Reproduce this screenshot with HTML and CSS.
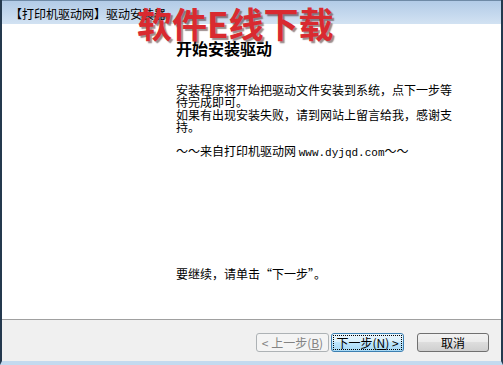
FILE: index.html
```html
<!DOCTYPE html>
<html lang="zh-CN">
<head>
    <meta charset="UTF-8">
    <title>【打印机驱动网】驱动安装器</title>
    <link rel="stylesheet" href="styles.css">
</head>
<body>
    <div class="window">
        <div class="titlebar">【打印机驱动网】驱动安装器</div>
        <div class="watermark">软件E线下载</div>

        <div class="content">
            <h1>开始安装驱动</h1>
            <p class="info">安装程序将开始把驱动文件安装到系统，点下一步等待完成即可。</p>
            <p class="info">如果有出现安装失败，请到网站上留言给我，感谢支持。</p>
            <p class="info from">～～来自打印机驱动网 <span class="url">www.dyjqd.com</span>～～</p>
            <p class="info next-hint">要继续，请单击“下一步”。</p>
        </div>

        <div class="footer">
            <button class="btn btn-back" disabled>&lt; 上一步(<u>B</u>)</button>
            <button class="btn btn-next"><span class="focus">下一步(<u>N</u>) &gt;</span></button>
            <button class="btn btn-cancel">取消</button>
        </div>
    </div>
</body>
</html>
```

FILE: styles.css
```css
* { margin: 0; padding: 0; box-sizing: border-box; }
body {
    font-family: 'Noto Sans CJK SC', 'DejaVu Sans', sans-serif;
    font-size: 12px;
    color: #000;
    background: #fff;
    width: 503px;
    height: 365px;
    overflow: hidden;
}
.window {
    position: relative;
    width: 503px;
    height: 365px;
    display: flex;
    flex-direction: column;
    border-left: 2px solid #24394e;
    border-right: 2px solid #24394e;
    border-bottom: 4px solid #c3daef;
    background: #fff;
}
.titlebar {
    height: 24px;
    line-height: 25px;
    padding-left: 8px;
    background: linear-gradient(#b2cbe7, #d2e2f2);
    border-top: 1px solid #6f8aa6;
    white-space: nowrap;
}
.watermark {
    position: absolute;
    left: 135px;
    top: 4px;
    font-size: 35px;
    line-height: 38px;
    font-weight: 700;
    color: #d92a30;
    text-shadow: 2px 2px 1px rgba(60, 30, 30, 0.5);
    white-space: nowrap;
}
.content {
    flex: 1;
    padding: 15px 0 0 174px;
    background: #fff;
}
h1 {
    font-size: 16px;
    font-weight: 700;
    line-height: 18px;
    margin-bottom: 27px;
}
.info {
    width: 282px;
    line-height: 12.3px;
}
.from {
    margin-top: 12px;
}
.url {
    font-family: 'Liberation Mono', monospace;
    font-size: 11px;
}
.next-hint {
    margin-top: 109px;
}
.footer {
    height: 42px;
    border-top: 1px solid #a0a0a0;
    background: #f0f0f0;
    display: flex;
    align-items: flex-start;
    padding: 13px 0 0 254px;
}
.btn {
    font-family: inherit;
    font-size: 12px;
    width: 73px;
    height: 19px;
    line-height: 15px;
    border-radius: 3px;
    border: 1px solid #707070;
    background: linear-gradient(#f2f2f2 0%, #ebebeb 45%, #dddddd 50%, #cfcfcf 100%);
    color: #000;
}
.btn-back {
    border-color: #adb2b5;
    background: #f4f4f4;
    color: #838383;
}
.btn-next {
    margin-left: 2px;
    border-color: #3c7fb1;
    background: linear-gradient(#eaf6fd 0%, #d9f0fc 45%, #bee6fd 50%, #a7d9f5 100%);
    padding: 1px;
}
.btn-next .focus {
    display: block;
    height: 15px;
    border: 1px dotted #000;
    line-height: 13px;
}
.btn-cancel {
    margin-left: 13px;
    width: 72px;
}
```
